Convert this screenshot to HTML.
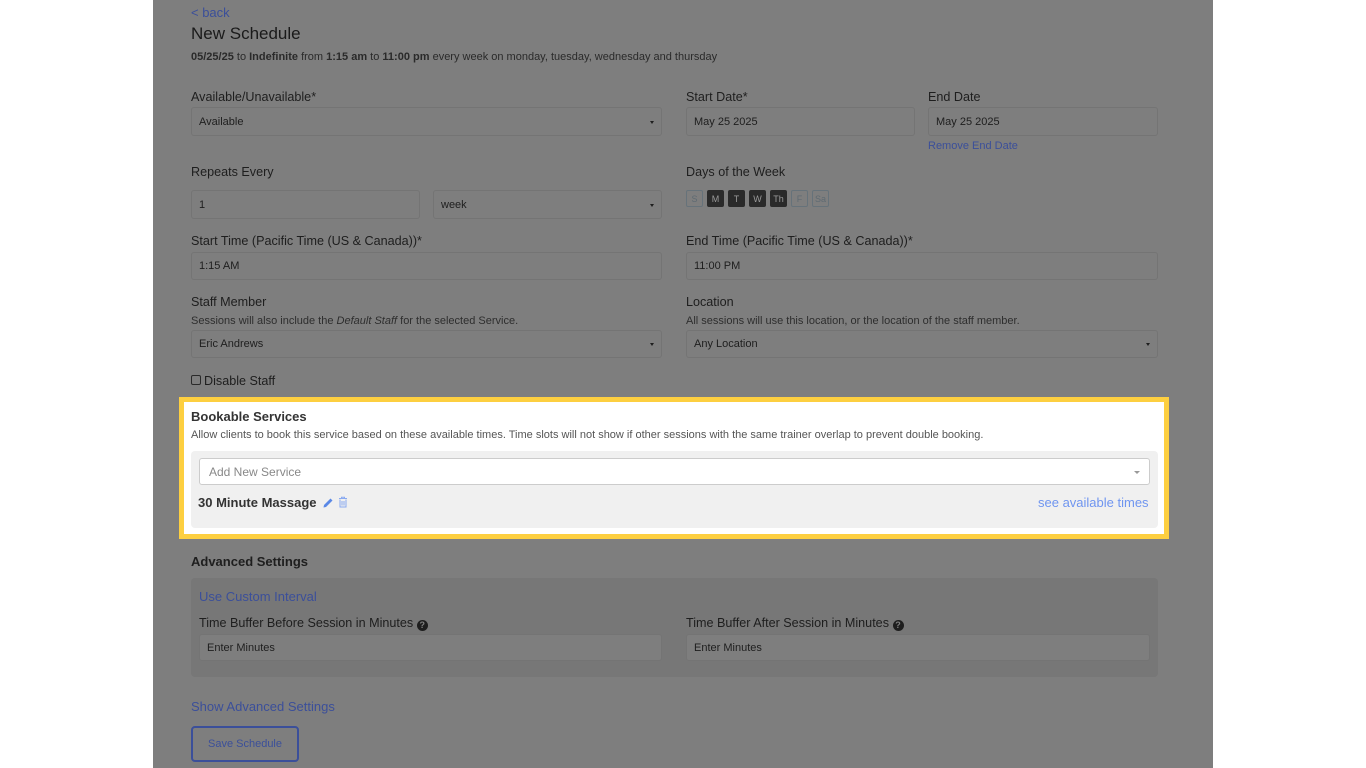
<!DOCTYPE html>
<html><head><meta charset="utf-8"><style>
*{box-sizing:border-box;margin:0;padding:0}
body{width:1366px;height:768px;background:#fff;font-family:"Liberation Sans",Arial,sans-serif;position:relative;overflow:hidden;color:#1e1e1e}
#ov{position:absolute;left:153px;top:0;width:1060px;height:768px;background:#7e7e7e}
.a{position:absolute;white-space:nowrap}
.lbl{font-size:12.6px;color:#1e1e1e}
.sm{font-size:11px;color:#2e2e2e}
.in{position:absolute;border:1px solid #747474;border-radius:3px;background:#7e7e7e;font-size:11px;padding-left:7px;display:flex;align-items:center;color:#1e1e1e}
.car{position:absolute;right:7px;top:50%;margin-top:-1px;border-left:2.5px solid transparent;border-right:2.5px solid transparent;border-top:3px solid #1e1e1e}
.lnk{color:#3b4f9a}
.d{position:absolute;top:190px;width:17px;height:17px;border-radius:2px;font-size:9px;display:flex;align-items:center;justify-content:center}
.on{background:#2a2a2a;color:#9a9a9a}
.off{border:1px solid #66727a;color:#5e6a72;background:#7e7e7e}
</style></head><body>
<div id="ov"></div>
<div class="a lnk" style="left:191px;top:5px;font-size:13px">&lt; back</div>
<div class="a" style="left:191px;top:24px;font-size:17px;color:#1a1a1a">New Schedule</div>
<div class="a sm" style="left:191px;top:51px;color:#2a2a2a"><b>05/25/25</b> to <b>Indefinite</b> from <b>1:15 am</b> to <b>11:00 pm</b> every week on monday, tuesday, wednesday and thursday</div>

<div class="a lbl" style="left:191px;top:90px">Available/Unavailable*</div>
<div class="in" style="left:191px;top:107px;width:471px;height:29px">Available<span class="car"></span></div>
<div class="a lbl" style="left:686px;top:90px">Start Date*</div>
<div class="in" style="left:686px;top:107px;width:229px;height:29px">May 25 2025</div>
<div class="a lbl" style="left:928px;top:90px">End Date</div>
<div class="in" style="left:928px;top:107px;width:230px;height:29px">May 25 2025</div>
<div class="a lnk" style="left:928px;top:140px;font-size:11px">Remove End Date</div>

<div class="a lbl" style="left:191px;top:165px">Repeats Every</div>
<div class="in" style="left:191px;top:190px;width:229px;height:29px">1</div>
<div class="in" style="left:433px;top:190px;width:229px;height:29px">week<span class="car"></span></div>
<div class="a lbl" style="left:686px;top:165px">Days of the Week</div>
<div class="d off" style="left:686px">S</div>
<div class="d on" style="left:707px">M</div>
<div class="d on" style="left:728px">T</div>
<div class="d on" style="left:749px">W</div>
<div class="d on" style="left:770px">Th</div>
<div class="d off" style="left:791px">F</div>
<div class="d off" style="left:812px">Sa</div>

<div class="a lbl" style="left:191px;top:234px">Start Time (Pacific Time (US &amp; Canada))*</div>
<div class="in" style="left:191px;top:252px;width:471px;height:28px">1:15 AM</div>
<div class="a lbl" style="left:686px;top:234px">End Time (Pacific Time (US &amp; Canada))*</div>
<div class="in" style="left:686px;top:252px;width:472px;height:28px">11:00 PM</div>

<div class="a lbl" style="left:191px;top:295px">Staff Member</div>
<div class="a sm" style="left:191px;top:315px">Sessions will also include the <i>Default Staff</i> for the selected Service.</div>
<div class="in" style="left:191px;top:330px;width:471px;height:28px">Eric Andrews<span class="car"></span></div>
<div class="a lbl" style="left:686px;top:295px">Location</div>
<div class="a sm" style="left:686px;top:315px">All sessions will use this location, or the location of the staff member.</div>
<div class="in" style="left:686px;top:330px;width:472px;height:28px">Any Location<span class="car"></span></div>

<div class="a" style="left:191px;top:375px;width:10px;height:10px;border:1px solid #2a2a2a;border-radius:2px"></div>
<div class="a lbl" style="left:204px;top:374px">Disable Staff</div>

<div class="a" style="left:179px;top:397px;width:990px;height:142px;border:5px solid #fdcf40;background:#fff"></div>
<div class="a" style="left:191px;top:409px;font-size:13px;font-weight:bold;color:#333">Bookable Services</div>
<div class="a" style="left:191px;top:429px;font-size:11px;color:#555">Allow clients to book this service based on these available times. Time slots will not show if other sessions with the same trainer overlap to prevent double booking.</div>
<div class="a" style="left:191px;top:451px;width:967px;height:77px;background:#f0f0f0;border-radius:4px"></div>
<div class="a" style="left:199px;top:458px;width:951px;height:27px;background:#fff;border:1px solid #ccc;border-radius:3px;font-size:12px;color:#888;padding:6px 9px">Add New Service<span style="position:absolute;right:9px;top:12px;border-left:3px solid transparent;border-right:3px solid transparent;border-top:3px solid #999"></span></div>
<div class="a" style="left:198px;top:495px;font-size:13px;font-weight:bold;color:#333">30 Minute Massage</div>
<svg class="a" style="left:322px;top:497px" width="12" height="12" viewBox="0 0 12 12"><path d="M1.5 10.5 L2 8 L8.5 1.5 L10.5 3.5 L4 10 Z" fill="#5a88e6"/></svg>
<svg class="a" style="left:338px;top:496px" width="10" height="12" viewBox="0 0 10 12"><path d="M1 2.5H9M3.5 2.5V1.2H6.5V2.5M2 3.5V11H8V3.5M4 5V9.5M6 5V9.5" stroke="#8aaaf0" stroke-width="1" fill="none"/></svg>
<div class="a" style="left:1038px;top:495px;font-size:13px;color:#6f95f0">see available times</div>

<div class="a" style="left:191px;top:554px;font-size:13px;font-weight:bold;color:#1e1e1e">Advanced Settings</div>
<div class="a" style="left:191px;top:578px;width:967px;height:99px;background:#777;border-radius:4px"></div>
<div class="a lnk" style="left:199px;top:589px;font-size:13px">Use Custom Interval</div>
<div class="a lbl" style="left:199px;top:616px">Time Buffer Before Session in Minutes <span style="display:inline-block;width:11px;height:11px;border-radius:50%;background:#1e1e1e;color:#808080;font-size:9px;text-align:center;line-height:11px;font-weight:bold;vertical-align:-1px">?</span></div>
<div class="in" style="left:199px;top:634px;width:463px;height:27px">Enter Minutes</div>
<div class="a lbl" style="left:686px;top:616px">Time Buffer After Session in Minutes <span style="display:inline-block;width:11px;height:11px;border-radius:50%;background:#1e1e1e;color:#808080;font-size:9px;text-align:center;line-height:11px;font-weight:bold;vertical-align:-1px">?</span></div>
<div class="in" style="left:686px;top:634px;width:464px;height:27px">Enter Minutes</div>

<div class="a lnk" style="left:191px;top:699px;font-size:13px">Show Advanced Settings</div>
<div class="a lnk" style="left:191px;top:726px;width:108px;height:36px;border:2px solid #3b4f9a;border-radius:4px;font-size:11px;display:flex;align-items:center;justify-content:center">Save Schedule</div>
</body></html>
